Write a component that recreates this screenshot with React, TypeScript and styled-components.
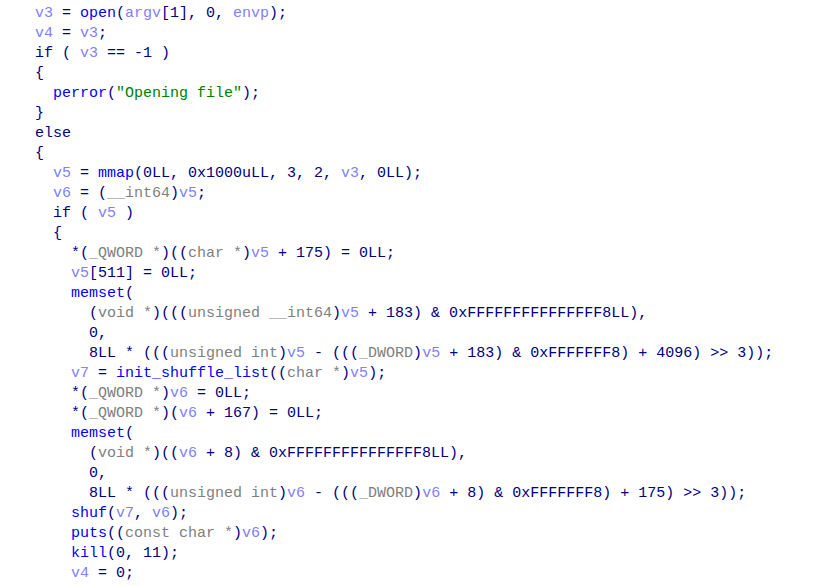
import React from "react";
import styled, { createGlobalStyle } from "styled-components";

const Global = createGlobalStyle`
  html, body { margin: 0; padding: 0; background: #ffffff; }
  body { width: 814px; height: 586px; overflow: hidden; }
`;

type Kind = "p" | "v" | "f" | "t" | "s";

const colors: Record<Kind, string> = {
  p: "#000080",
  v: "#8080ff",
  f: "#0000ff",
  t: "#808080",
  s: "#008000",
};

const Code = styled.div`
  padding: 4px 0 0 35px;
  font-family: "Liberation Mono", "DejaVu Sans Mono", monospace;
  font-size: 15px;
  line-height: 20px;
  color: #000080;
  background: #ffffff;
`;

const Line = styled.div<{ $indent: number }>`
  height: 20px;
  white-space: pre;
  padding-left: ${(p) => p.$indent * 18}px;
`;

const Tok = styled.span<{ $kind: Kind }>`
  color: ${(p) => colors[p.$kind]};
`;

const src: [number, string][] = [
  [0, "[v|v3] = [f|open]([v|argv][1], 0, [v|envp]);"],
  [0, "[v|v4] = [v|v3];"],
  [0, "if ( [v|v3] == -1 )"],
  [0, "{"],
  [1, '[f|perror]([s|"Opening file"]);'],
  [0, "}"],
  [0, "else"],
  [0, "{"],
  [1, "[v|v5] = [f|mmap](0LL, 0x1000uLL, 3, 2, [v|v3], 0LL);"],
  [1, "[v|v6] = ([t|__int64])[v|v5];"],
  [1, "if ( [v|v5] )"],
  [1, "{"],
  [2, "*([t|_QWORD *])(([t|char *])[v|v5] + 175) = 0LL;"],
  [2, "[v|v5][511] = 0LL;"],
  [2, "[f|memset]("],
  [3, "([t|void *])((([t|unsigned __int64])[v|v5] + 183) & 0xFFFFFFFFFFFFFFF8LL),"],
  [3, "0,"],
  [3, "8LL * ((([t|unsigned int])[v|v5] - ((([t|_DWORD])[v|v5] + 183) & 0xFFFFFFF8) + 4096) >> 3));"],
  [2, "[v|v7] = [f|init_shuffle_list](([t|char *])[v|v5]);"],
  [2, "*([t|_QWORD *])[v|v6] = 0LL;"],
  [2, "*([t|_QWORD *])([v|v6] + 167) = 0LL;"],
  [2, "[f|memset]("],
  [3, "([t|void *])(([v|v6] + 8) & 0xFFFFFFFFFFFFFFF8LL),"],
  [3, "0,"],
  [3, "8LL * ((([t|unsigned int])[v|v6] - ((([t|_DWORD])[v|v6] + 8) & 0xFFFFFFF8) + 175) >> 3));"],
  [2, "[f|shuf]([v|v7], [v|v6]);"],
  [2, "[f|puts](([t|const char *])[v|v6]);"],
  [2, "[f|kill](0, 11);"],
  [2, "[v|v4] = 0;"],
];

function tokenize(line: string): { kind: Kind; text: string }[] {
  const out: { kind: Kind; text: string }[] = [];
  const re = /\[([vfts])\|([^\]]*)\]/g;
  let last = 0;
  let m: RegExpExecArray | null;
  while ((m = re.exec(line))) {
    if (m.index > last) out.push({ kind: "p", text: line.slice(last, m.index) });
    out.push({ kind: m[1] as Kind, text: m[2] });
    last = m.index + m[0].length;
  }
  if (last < line.length) out.push({ kind: "p", text: line.slice(last) });
  return out;
}

export default function App() {
  return (
    <>
      <Global />
      <Code>
        {src.map(([indent, text], i) => (
          <Line key={i} $indent={indent}>
            {tokenize(text).map((t, j) => (
              <Tok key={j} $kind={t.kind}>
                {t.text}
              </Tok>
            ))}
          </Line>
        ))}
      </Code>
    </>
  );
}
